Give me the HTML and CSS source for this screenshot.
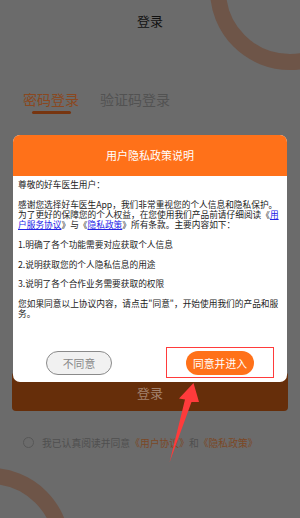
FILE: index.html
```html
<!DOCTYPE html>
<html lang="zh-CN">
<head>
<meta charset="utf-8">
<link rel="stylesheet" href="styles.css">
</head>
<body>
<div class="page">
  <div class="ring ring-top"></div>
  <div class="ring ring-bottom"></div>
  <header class="topbar">登录</header>
  <nav class="tabs">
    <div class="tab active">密码登录<span class="bar"></span></div>
    <div class="tab">验证码登录</div>
  </nav>
  <button class="login">登录</button>
  <div class="agree">
    <span class="check"></span>
    <span>我已认真阅读并同意<em>《用户协议》</em>和<em>《隐私政策》</em></span>
  </div>
</div>

<div class="modal">
  <div class="modal-head">用户隐私政策说明</div>
  <div class="modal-body">
    <p>尊敬的好车医生用户：</p>
    <p>感谢您选择好车医生App，我们非常重视您的个人信息和隐私保护。为了更好的保障您的个人权益，在您使用我们产品前请仔细阅读《<a>用户服务协议</a>》与《<a>隐私政策</a>》所有条款。主要内容如下：</p>
    <p>1.明确了各个功能需要对应获取个人信息</p>
    <p>2.说明获取您的个人隐私信息的用途</p>
    <p>3.说明了各个合作业务需要获取的权限</p>
    <p>您如果同意以上协议内容，请点击"同意"，开始使用我们的产品和服务。</p>
  </div>
  <div class="modal-actions">
    <button class="btn-no">不同意</button>
    <button class="btn-yes">同意并进入</button>
  </div>
</div>

<div class="highlight"></div>
<svg class="arrow" width="300" height="518" viewBox="0 0 300 518">
  <polygon points="193.5,383 179,398.5 185,399.5 169.5,462.5 191.5,402 199,402" fill="#ff3b3b"/>
</svg>
</body>
</html>
```

FILE: styles.css
```css
* { box-sizing: border-box; }
html, body { margin: 0; padding: 0; }
body {
  width: 300px;
  height: 518px;
  overflow: hidden;
  background: #6b6b6b;
  font-family: "Noto Sans CJK SC", "Noto Sans", sans-serif;
  position: relative;
}
.page {
  position: relative;
  height: 518px;
  display: flex;
  flex-direction: column;
}
.ring {
  position: absolute;
  width: 160px;
  height: 160px;
  border: 16px solid #6e5548;
  border-radius: 50%;
}
.ring-top { left: 210px; top: -90px; }
.ring-bottom { left: -90px; top: 468px; }

.topbar {
  position: relative;
  height: 42px;
  line-height: 42px;
  text-align: center;
  font-size: 13px;
  color: #111;
}
.tabs {
  position: relative;
  display: flex;
  gap: 21px;
  margin-top: 47px;
  padding-left: 23px;
}
.tab {
  display: flex;
  flex-direction: column;
  align-items: center;
  font-size: 14px;
  line-height: 20px;
  color: #525252;
}
.tab.active { color: #8a4820; }
.tab .bar {
  width: 39px;
  height: 2.5px;
  margin-top: 2px;
  border-radius: 2px;
  background: #773510;
}
.login {
  position: relative;
  margin: 258px 12px 0;
  height: 39px;
  border: 0;
  border-radius: 4px;
  background: #662e0a;
  color: #a3826e;
  font-family: inherit;
  font-size: 13px;
  padding: 2px 0 0;
}
.agree {
  position: relative;
  display: flex;
  align-items: center;
  gap: 8px;
  margin-top: 25px;
  padding-left: 23px;
  font-size: 9.8px;
  line-height: 14px;
  color: #4f4f4f;
}
.agree em { font-style: normal; color: #7b4826; }
.check {
  width: 11px;
  height: 11px;
  border: 1px solid #575757;
  border-radius: 50%;
}

.modal {
  position: absolute;
  left: 13px;
  top: 135px;
  width: 274px;
  height: 247px;
  background: #fff;
  border-radius: 7px;
  overflow: hidden;
  display: flex;
  flex-direction: column;
}
.modal-head {
  height: 41px;
  line-height: 41px;
  background: #ff7119;
  color: #fff;
  text-align: center;
  font-size: 11px;
}
.modal-body {
  padding: 4px 5px 0 5px;
  font-size: 8.7px;
  line-height: 10.3px;
  color: #222;
}
.modal-body p { margin: 0 0 9.4px; }
.modal-body a {
  color: #2323e6;
  text-decoration: underline;
}
.modal-actions {
  margin-top: auto;
  display: flex;
  justify-content: space-between;
  padding: 0 33px 7px;
}
.modal-actions button {
  height: 24px;
  border-radius: 12px;
  font-family: inherit;
  font-size: 10.8px;
  padding: 0;
}
.btn-no {
  width: 66px;
  background: #f1f1f1;
  border: 1.5px solid #8a8a8a;
  color: #888;
}
.btn-yes {
  width: 68px;
  background: #ff7119;
  border: 0;
  color: #fff;
}
.highlight {
  position: absolute;
  left: 166px;
  top: 347px;
  width: 108px;
  height: 31px;
  border: 1.5px solid #ff3b3b;
}
.arrow {
  position: absolute;
  left: 0;
  top: 0;
}
```
